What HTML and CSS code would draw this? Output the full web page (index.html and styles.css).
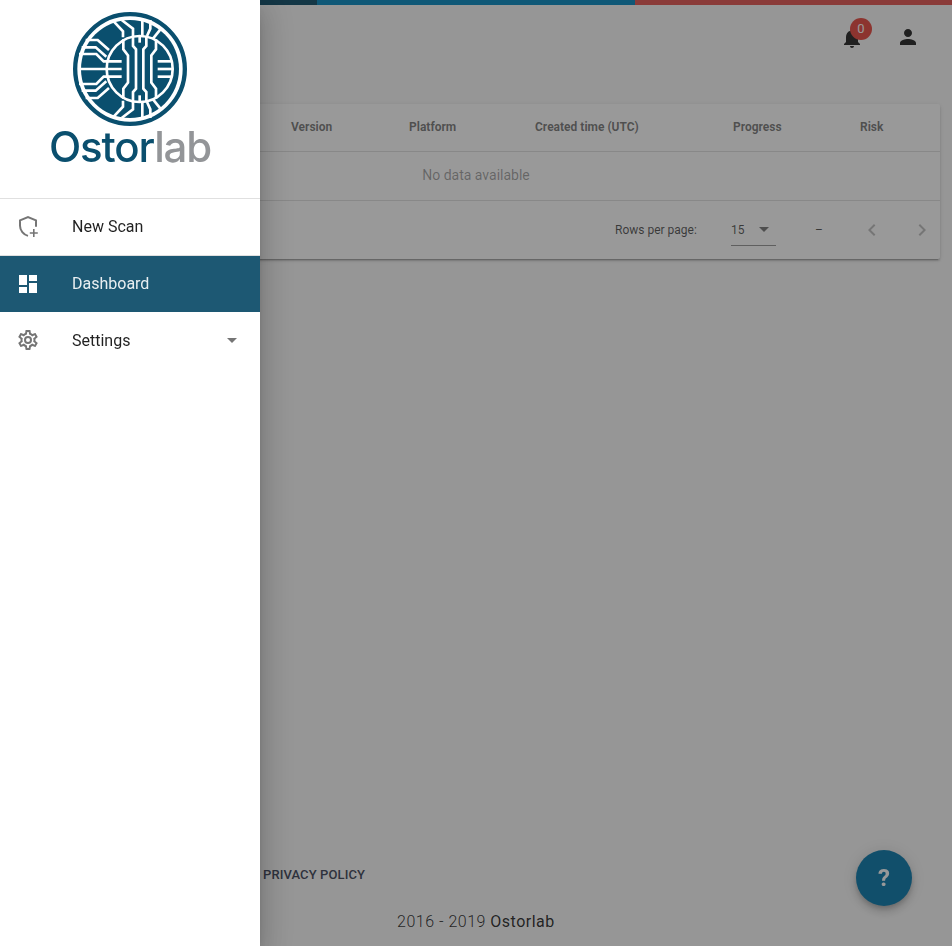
FILE: index.html
```html
<!DOCTYPE html>
<html lang="en">
<head>
<meta charset="utf-8">
<title>Ostorlab</title>
<link rel="stylesheet" href="styles.css">
</head>
<body>
<div class="app">
  <div class="progress"><span class="seg seg-dark"></span><span class="seg seg-blue"></span><span class="seg seg-red"></span></div>
  <header class="toolbar">
    <div class="bell">
      <svg class="icon" viewBox="0 0 24 24"><path d="M12 22c1.1 0 2-.9 2-2h-4c0 1.1.9 2 2 2zm6-6v-5c0-3.07-1.63-5.64-4.5-6.32V4c0-.83-.67-1.5-1.5-1.5s-1.5.67-1.5 1.5v.68C7.64 5.36 6 7.92 6 11v5l-2 2v1h16v-1l-2-2z"/></svg>
      <span class="badge">0</span>
    </div>
    <svg class="icon" viewBox="0 0 24 24"><path d="M12 12c2.21 0 4-1.79 4-4s-1.79-4-4-4-4 1.79-4 4 1.79 4 4 4zm0 2c-2.67 0-8 1.34-8 4v2h16v-2c0-2.66-5.33-4-8-4z"/></svg>
  </header>
  <main class="content">
    <section class="card">
      <div class="thead">
        <span></span><span>Version</span><span>Platform</span><span>Created time (UTC)</span><span>Progress</span><span>Risk</span>
      </div>
      <div class="empty">No data available</div>
      <div class="pager">
        <span class="rows-label">Rows per page:</span>
        <div class="rows-select"><span>15</span><i class="caret"></i></div>
        <span class="range">–</span>
        <svg class="chev" viewBox="0 0 24 24"><path d="M15.41 7.41 14 6l-6 6 6 6 1.41-1.41L10.83 12z"/></svg>
        <svg class="chev" viewBox="0 0 24 24"><path d="M10 6 8.59 7.41 13.17 12l-4.58 4.59L10 18l6-6z"/></svg>
      </div>
    </section>
  </main>
  <footer class="footer">
    <a class="policy">PRIVACY POLICY</a>
    <p class="copy">2016 - 2019 <strong>Ostorlab</strong></p>
  </footer>
</div>

<button class="fab">?</button>
<div class="scrim"></div>

<aside class="drawer">
  <div class="brand">
    <svg class="mark" viewBox="0 0 342 342">
      <circle class="ring" cx="171" cy="171" r="164.5"/>
      <circle class="disc" cx="171" cy="171" r="147"/>
      <g class="traces">
        <circle cx="200" cy="171" r="99"/>
        <path d="M20 171H146"/>
        <g id="half">
          <path d="M38 84H74L108 114"/>
          <path d="M26 106H68L100 134"/>
          <path d="M18 126H70L92 148H146"/>
          <path d="M122 28 150 58V76"/>
          <path d="M146 24 180 50V72"/>
          <path d="M208 20V72"/>
          <path d="M232 24V50L222 72"/>
          <path d="M264 50 240 80"/>
          <path d="M189 171V112L180 102V72"/>
          <path d="M211 171V112L220 102V72"/>
          <path d="M200 70V92"/>
          <path d="M165 171V130L151 112V82"/>
          <path d="M235 171V130L249 112V82"/>
          <path d="M254 148H298"/>
        </g>
        <use href="#half" transform="matrix(1 0 0 -1 0 342)"/>
        <path d="M254 171H298"/>
      </g>
    </svg>
    <div class="wordmark">Ostor<span>lab</span></div>
  </div>
  <nav class="menu">
    <a class="item first">
      <svg class="item-icon" viewBox="0 0 24 24"><path class="stroke" d="M12 20.9C7.5 19.6 4 15.5 4 10.8V5.4L12 2l8 3.4v6.4"/><path d="M17 14h1.6v3.2h3.2v1.6h-3.2V22H17v-3.2h-3.2v-1.6H17z"/></svg>
      <span>New Scan</span>
    </a>
    <a class="item active">
      <svg class="item-icon" viewBox="0 0 24 24"><path d="M3 13h8V3H3v10zm0 8h8v-6H3v6zm10 0h8V11h-8v10zm0-18v6h8V3h-8z"/></svg>
      <span>Dashboard</span>
    </a>
    <a class="item">
      <svg class="item-icon" viewBox="0 0 24 24"><path d="M12,8A4,4 0 0,1 16,12A4,4 0 0,1 12,16A4,4 0 0,1 8,12A4,4 0 0,1 12,8M12,10A2,2 0 0,0 10,12A2,2 0 0,0 12,14A2,2 0 0,0 14,12A2,2 0 0,0 12,10M10,22C9.75,22 9.54,21.82 9.5,21.58L9.13,18.93C8.5,18.68 7.96,18.34 7.44,17.94L4.95,18.95C4.73,19.03 4.46,18.95 4.34,18.73L2.34,15.27C2.21,15.05 2.27,14.78 2.46,14.63L4.57,12.97L4.5,12L4.57,11L2.46,9.37C2.27,9.22 2.21,8.95 2.34,8.73L4.34,5.27C4.46,5.05 4.73,4.96 4.95,5.05L7.44,6.05C7.96,5.66 8.5,5.32 9.13,5.07L9.5,2.42C9.54,2.18 9.75,2 10,2H14C14.25,2 14.46,2.18 14.5,2.42L14.87,5.07C15.5,5.32 16.04,5.66 16.56,6.05L19.05,5.05C19.27,4.96 19.54,5.05 19.66,5.27L21.66,8.73C21.79,8.95 21.73,9.22 21.54,9.37L19.43,11L19.5,12L19.43,13L21.54,14.63C21.73,14.78 21.79,15.05 21.66,15.27L19.66,18.73C19.54,18.95 19.27,19.04 19.05,18.95L16.56,17.95C16.04,18.34 15.5,18.68 14.87,18.93L14.5,21.58C14.46,21.82 14.25,22 14,22H10M11.25,4L10.88,6.61C9.68,6.86 8.62,7.5 7.85,8.39L5.44,7.35L4.69,8.65L6.8,10.2C6.4,11.37 6.4,12.64 6.8,13.8L4.68,15.36L5.43,16.66L7.86,15.62C8.63,16.5 9.68,17.14 10.87,17.38L11.24,20H12.76L13.13,17.39C14.32,17.14 15.37,16.5 16.14,15.62L18.57,16.66L19.32,15.36L17.2,13.81C17.6,12.64 17.6,11.37 17.2,10.2L19.31,8.65L18.56,7.35L16.15,8.39C15.38,7.5 14.32,6.86 13.12,6.62L12.75,4H11.25Z"/></svg>
      <span>Settings</span>
      <i class="caret menu-caret"></i>
    </a>
  </nav>
</aside>
</body>
</html>
```
FILE: styles.css
```css
* { box-sizing: border-box; }
html, body { margin: 0; height: 100%; overflow: hidden; }
body { background: #fafafa; font-family: Roboto, "Liberation Sans", sans-serif; color: rgba(0,0,0,.87); }

.app { display: flex; flex-direction: column; height: 946px; }

.progress { display: flex; height: 5px; flex: none; }
.seg { flex: 1; }
.seg-dark { background: #0a4a66; }
.seg-blue { background: #0087c0; }
.seg-red { background: #e4524f; }

.toolbar { display: flex; justify-content: flex-end; align-items: center; gap: 32px; height: 64px; padding: 0 32px 0 0; flex: none; }
.icon { width: 24px; height: 24px; fill: #212121; display: block; }
.bell { position: relative; width: 24px; height: 24px; margin-top: 1px; }
.badge { position: absolute; left: 10px; top: -8px; width: 22px; height: 22px; border-radius: 50%; background: #e8453c; color: #fff; font-size: 13px; line-height: 22px; text-align: center; }

.content { flex: 1; padding: 35px 12px 0; }
.card { background: #fff; border-radius: 2px; box-shadow: 0 3px 1px -2px rgba(0,0,0,.2), 0 2px 2px rgba(0,0,0,.14), 0 1px 5px rgba(0,0,0,.12); }
.thead { display: grid; grid-template-columns: 255px 118px 126px 198px 127px 104px; height: 48px; padding-bottom: 2px; align-items: center; border-bottom: 1px solid rgba(0,0,0,.12); font-size: 12px; font-weight: 700; color: rgba(0,0,0,.54); }
.thead span { padding-left: 24px; white-space: nowrap; }
.empty { height: 49px; line-height: 47px; text-align: center; font-size: 14px; color: rgba(0,0,0,.38); border-bottom: 1px solid rgba(0,0,0,.12); }
.pager { display: flex; align-items: center; height: 58px; padding-left: 603px; font-size: 12px; color: rgba(0,0,0,.7); }
.rows-label { width: 116px; }
.rows-select { display: flex; align-items: center; gap: 14px; width: 45px; height: 32px; border-bottom: 1px solid rgba(0,0,0,.42); }
.caret { display: block; width: 0; height: 0; border-left: 5px solid transparent; border-right: 5px solid transparent; border-top: 5px solid rgba(0,0,0,.54); }
.range { width: 14px; margin-left: 39px; }
.chev { width: 24px; height: 24px; fill: rgba(0,0,0,.26); }
.range + .chev { margin-left: 31px; }
.chev + .chev { margin-left: 26px; }

.footer { flex: none; height: 96px; padding-left: 263px; }
.policy { display: block; font-size: 13px; font-weight: 500; letter-spacing: .1px; line-height: 16px; color: #3a4256; padding-top: 17px; }
.copy { margin: 27px 0 0 134px; font-size: 16px; font-weight: 300; letter-spacing: .5px; line-height: 24px; color: rgba(0,0,0,.87); }
.copy strong { font-weight: 400; }

.fab { position: fixed; right: 40px; bottom: 40px; width: 56px; height: 56px; border: 0; padding: 0; border-radius: 50%; background: #0577ab; color: #fff; font: 700 24px Roboto, sans-serif; box-shadow: 0 3px 5px -1px rgba(0,0,0,.2), 0 6px 10px rgba(0,0,0,.14), 0 1px 18px rgba(0,0,0,.12); }

.scrim { position: fixed; inset: 0; background: rgba(33,33,33,.46); }

.drawer { position: fixed; left: 0; top: 0; bottom: 0; width: 260px; background: #fff; box-shadow: 0 8px 10px -5px rgba(0,0,0,.2), 0 16px 24px 2px rgba(0,0,0,.14), 0 6px 30px 5px rgba(0,0,0,.12); }
.brand { height: 199px; border-bottom: 1px solid #e0e0e0; display: flex; flex-direction: column; align-items: center; padding-top: 12px; }
.mark { width: 114px; height: 114px; display: block; }
.ring { fill: #fff; stroke: #0a4f6e; stroke-width: 13; }
.disc { fill: #0a4f6e; }
.traces { fill: none; stroke: #fff; stroke-width: 8; }
.wordmark { font-family: Inter, sans-serif; font-weight: 500; font-size: 42px; letter-spacing: -1.15px; line-height: 44px; margin-top: -1px; color: #0a4f6e; }
.wordmark span { color: #939598; }

.menu { display: flex; flex-direction: column; }
.item { display: flex; align-items: center; height: 56px; padding: 0 20px 0 16px; font-size: 16px; color: rgba(0,0,0,.87); }
.first { height: 57px; padding-bottom: 1px; border-bottom: 1px solid #e0e0e0; }
.item span { margin-left: 32px; }
.item-icon { width: 24px; height: 24px; flex: none; fill: #757575; }
.item-icon .stroke { fill: none; stroke: #757575; stroke-width: 2; }
.active { background: #1d5873; color: rgba(255,255,255,.9); padding-bottom: 1px; }
.active .item-icon { fill: #fff; }
.menu-caret { margin-left: auto; margin-right: 3px; }
```
